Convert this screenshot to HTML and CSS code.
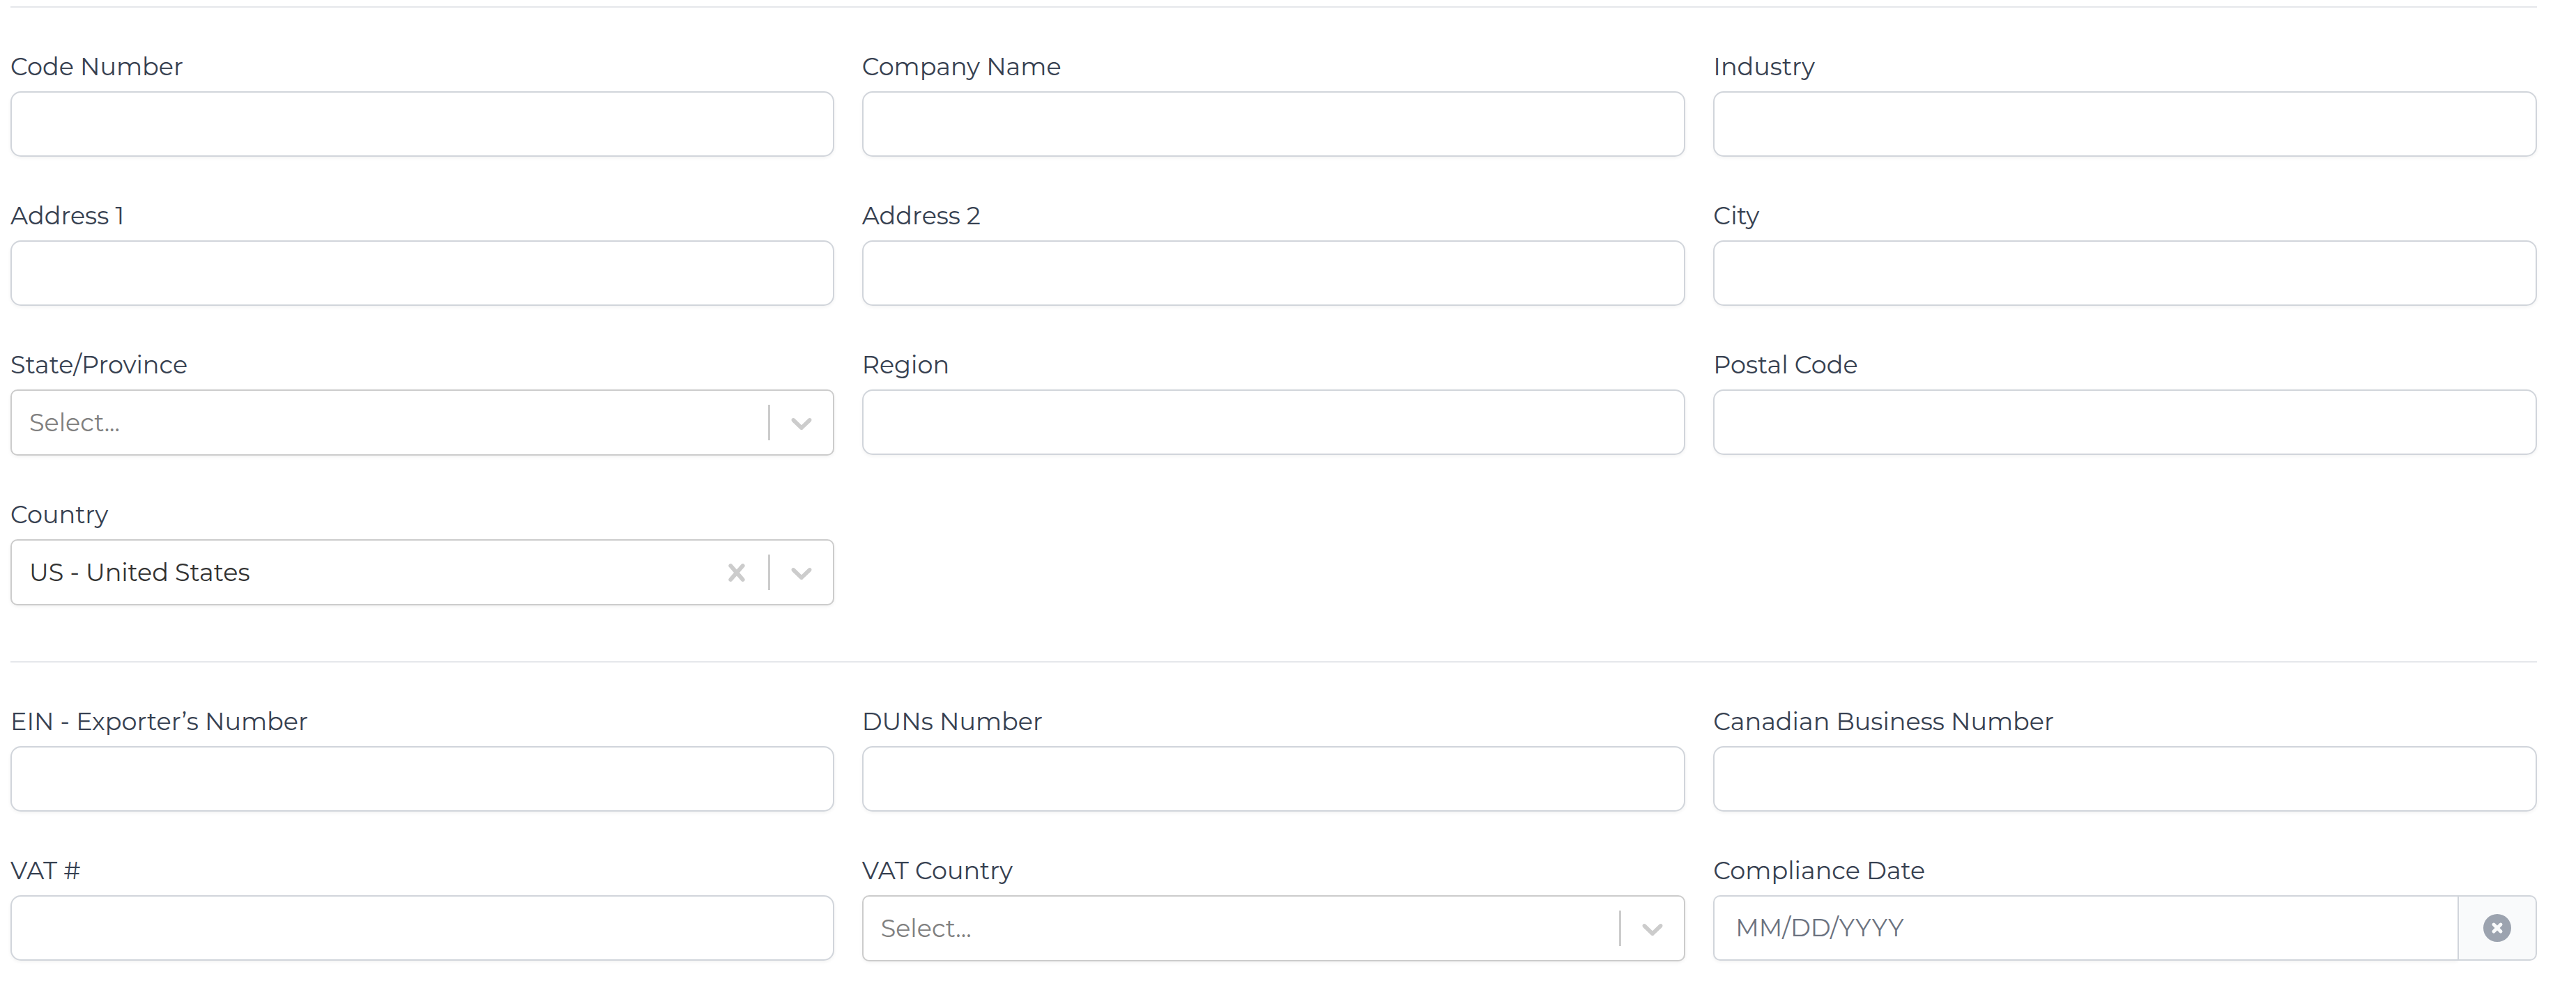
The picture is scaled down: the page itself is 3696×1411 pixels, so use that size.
FILE: index.html
```html
<!DOCTYPE html>
<html lang="en">
<head>
    <meta charset="UTF-8">
    <meta name="viewport" content="width=device-width, initial-scale=1.0">
    <title>Company Details</title>
    <link rel="stylesheet" href="styles.css">
</head>
<body>
    <!-- Shared icons -->
    <svg class="icon-defs" aria-hidden="true">
        <symbol id="icon-chevron" viewBox="0 0 20 20">
            <path d="M4.516 7.548c0.436-0.446 1.043-0.481 1.576 0l3.908 3.747 3.908-3.747c0.533-0.481 1.141-0.446 1.574 0 0.436 0.445 0.408 1.197 0 1.615-0.406 0.418-4.695 4.502-4.695 4.502-0.217 0.223-0.502 0.335-0.787 0.335s-0.57-0.112-0.789-0.335c0 0-4.287-4.084-4.695-4.502s-0.436-1.17 0-1.615z"/>
        </symbol>
        <symbol id="icon-cross" viewBox="0 0 20 20">
            <path d="M14.348 14.849c-0.469 0.469-1.229 0.469-1.697 0l-2.651-3.030-2.651 3.029c-0.469 0.469-1.229 0.469-1.697 0-0.469-0.469-0.469-1.229 0-1.697l2.758-3.15-2.759-3.152c-0.469-0.469-0.469-1.228 0-1.697s1.228-0.469 1.697 0l2.652 3.031 2.651-3.031c0.469-0.469 1.228-0.469 1.697 0s0.469 1.229 0 1.697l-2.758 3.152 2.758 3.15c0.469 0.469 0.469 1.229 0 1.698z"/>
        </symbol>
        <symbol id="icon-x-circle" viewBox="0 0 20 20">
            <path fill-rule="evenodd" d="M10 18a8 8 0 100-16 8 8 0 000 16zM8.707 7.293a1 1 0 00-1.414 1.414L8.586 10l-1.293 1.293a1 1 0 101.414 1.414L10 11.414l1.293 1.293a1 1 0 001.414-1.414L11.414 10l1.293-1.293a1 1 0 00-1.414-1.414L10 8.586 8.707 7.293z"/>
        </symbol>
    </svg>

    <form class="company-form">
        <div class="form-section">
            <div class="field">
                <label for="codeNumber">Code Number</label>
                <input type="text" id="codeNumber">
            </div>
            <div class="field">
                <label for="companyName">Company Name</label>
                <input type="text" id="companyName">
            </div>
            <div class="field">
                <label for="industry">Industry</label>
                <input type="text" id="industry">
            </div>
            <div class="field">
                <label for="address1">Address 1</label>
                <input type="text" id="address1">
            </div>
            <div class="field">
                <label for="address2">Address 2</label>
                <input type="text" id="address2">
            </div>
            <div class="field">
                <label for="city">City</label>
                <input type="text" id="city">
            </div>
            <div class="field">
                <label for="state">State/Province</label>
                <div class="select">
                    <select id="state" class="placeholder">
                        <option value="">Select...</option>
                    </select>
                    <div class="indicators">
                        <span class="separator"></span>
                        <svg class="icon"><use href="#icon-chevron"/></svg>
                    </div>
                </div>
            </div>
            <div class="field">
                <label for="region">Region</label>
                <input type="text" id="region">
            </div>
            <div class="field">
                <label for="postalCode">Postal Code</label>
                <input type="text" id="postalCode">
            </div>
            <div class="field">
                <label for="country">Country</label>
                <div class="select">
                    <select id="country">
                        <option value="US">US - United States</option>
                    </select>
                    <div class="indicators">
                        <button type="button" class="clear" aria-label="Clear country">
                            <svg class="icon"><use href="#icon-cross"/></svg>
                        </button>
                        <span class="separator"></span>
                        <svg class="icon"><use href="#icon-chevron"/></svg>
                    </div>
                </div>
            </div>
        </div>

        <div class="form-section">
            <div class="field">
                <label for="ein">EIN - Exporter’s Number</label>
                <input type="text" id="ein">
            </div>
            <div class="field">
                <label for="duns">DUNs Number</label>
                <input type="text" id="duns">
            </div>
            <div class="field">
                <label for="canadianNumber">Canadian Business Number</label>
                <input type="text" id="canadianNumber">
            </div>
            <div class="field">
                <label for="vat">VAT #</label>
                <input type="text" id="vat">
            </div>
            <div class="field">
                <label for="vatCountry">VAT Country</label>
                <div class="select">
                    <select id="vatCountry" class="placeholder">
                        <option value="">Select...</option>
                    </select>
                    <div class="indicators">
                        <span class="separator"></span>
                        <svg class="icon"><use href="#icon-chevron"/></svg>
                    </div>
                </div>
            </div>
            <div class="field">
                <label for="complianceDate">Compliance Date</label>
                <div class="date-group">
                    <input type="text" id="complianceDate" placeholder="MM/DD/YYYY">
                    <button type="button" class="date-clear" aria-label="Clear date">
                        <svg class="icon"><use href="#icon-x-circle"/></svg>
                    </button>
                </div>
            </div>
        </div>
    </form>
</body>
</html>
```
FILE: styles.css
```css
* {
    box-sizing: border-box;
}
body {
    margin: 0;
    padding: 9px 56px 0 15px;
    background-color: #fff;
    color: #374151;
    font-family: Montserrat, Inter, sans-serif;
    font-size: 35px;
    font-weight: 400;
    line-height: 50px;
}
input, select, button {
    font: inherit;
    margin: 0;
}
.icon-defs {
    display: none;
}
.form-section {
    display: grid;
    grid-template-columns: repeat(3, minmax(0, 1fr));
    column-gap: 40px;
    row-gap: 60px;
    align-items: start;
    padding: 60px 0 80px;
    border-top: 2px solid #e5e7eb;
}
.form-section:last-child {
    padding-bottom: 20px;
}
.field {
    display: flex;
    flex-direction: column;
    gap: 10px;
}
input {
    width: 100%;
    padding: 20px 30px;
    border: 2px solid #d1d5db;
    border-radius: 15px;
    background-color: #fff;
    color: #374151;
    box-shadow: 0 2px 5px rgba(0, 0, 0, 0.05);
}
input::placeholder {
    color: #6b7280;
    opacity: 1;
}
input:focus, select:focus {
    outline: none;
    border-color: #6366f1;
}

/* Select with its indicators laid over the right end */
.select {
    display: grid;
    align-items: center;
}
.select select {
    grid-area: 1 / 1;
    appearance: none;
    width: 100%;
    height: 95px;
    padding: 0 25px;
    border: 2px solid #ccc;
    border-radius: 10px;
    background-color: #fff;
    color: #333;
    box-shadow: 0 2px 5px rgba(0, 0, 0, 0.05);
}
.select select.placeholder {
    color: #808080;
}
.indicators {
    grid-area: 1 / 1;
    justify-self: end;
    display: flex;
    align-items: center;
    gap: 20px;
    padding-right: 22px;
    color: #ccc;
    pointer-events: none;
}
.separator {
    width: 3px;
    height: 51px;
    background-color: #ccc;
}
.icon {
    display: block;
    width: 50px;
    height: 50px;
    fill: currentColor;
}
.clear {
    padding: 0;
    border: none;
    background: none;
    color: inherit;
    cursor: pointer;
    pointer-events: auto;
}

/* Date field with attached clear button */
.date-group {
    display: flex;
}
.date-group input {
    flex: 1;
    min-width: 0;
    border-right: none;
    border-radius: 10px 0 0 10px;
}
.date-clear {
    padding: 0 30px;
    border: 2px solid #d1d5db;
    border-radius: 0 10px 10px 0;
    background-color: #f9fafb;
    color: #9ca3af;
    cursor: pointer;
}
```
